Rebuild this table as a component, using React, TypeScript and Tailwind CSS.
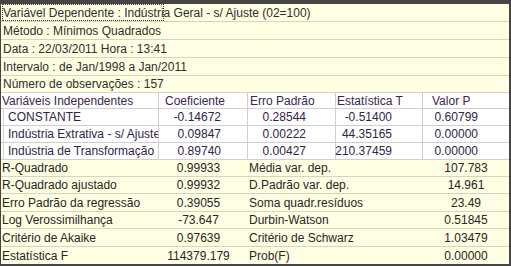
import React from 'react';

const info = [
  'Variável Dependente : Indústria Geral - s/ Ajuste (02=100)',
  'Método : Mínimos Quadrados',
  'Data : 22/03/2011  Hora : 13:41',
  'Intervalo : de Jan/1998 a Jan/2011',
  'Número de observações : 157',
];
const infoHeights = ['h-[18px]', 'h-[18px]', 'h-[18px]', 'h-[18px]', 'h-[17px]'];

const coefs = [
  ['CONSTANTE', '-0.14672', '0.28544', '-0.51400', '0.60799'],
  ['Indústria Extrativa - s/ Ajuste', '0.09847', '0.00222', '44.35165', '0.00000'],
  ['Indústria de Transformação', '0.89740', '0.00427', '210.37459', '0.00000'],
];

const stats = [
  ['R-Quadrado', '0.99933', 'Média var. dep.', '107.783', 'h-[17px]'],
  ['R-Quadrado ajustado', '0.99932', 'D.Padrão var. dep.', '14.961', 'h-[17px]'],
  ['Erro Padrão da regressão', '0.39055', 'Soma quadr.resíduos', '23.49', 'h-[18px]'],
  ['Log Verossimilhança', '-73.647', 'Durbin-Watson', '0.51845', 'h-[17px]'],
  ['Critério de Akaike', '0.97639', 'Critério de Schwarz', '1.03479', 'h-[18px]'],
  ['Estatística F', '114379.179', 'Prob(F)', '0.00000', 'h-[17px]'],
];

const cols = 'grid grid-cols-[158px_89px_88px_87px_1fr]';

export default function App() {
  return (
    <div className="w-[511px] h-[266px] bg-[#454545] pt-[4px] pl-[1px] pr-[2px] pb-[2px] font-['Liberation_Sans',Arial,sans-serif] text-[12px] leading-none">
      <div className="relative flex h-full flex-col bg-[#ffffe3] text-[#2e2e2e]">
        {/* focus rectangle on the first cell */}
        <div className="pointer-events-none absolute left-[1px] top-0 h-[17px] w-[162px] border border-dotted border-[#333]" />

        {info.map((t, i) => (
          <div key={i} className={`${infoHeights[i]} flex items-center whitespace-nowrap border-b border-[#d5d3c2] pl-[2px]`}>
            {t}
          </div>
        ))}

        <div className={`${cols} h-[16px] border-b border-[#cfcfcf] bg-white text-[#3a2550]`}>
          <div className="flex items-center border-r border-[#cfcfcf] pl-[1px] whitespace-nowrap">Variáveis Independentes</div>
          <div className="flex items-center border-r border-[#cfcfcf] pl-[6px]">Coeficiente</div>
          <div className="flex items-center border-r border-[#cfcfcf] pl-[2px]">Erro Padrão</div>
          <div className="flex items-center border-r border-[#cfcfcf] pl-[1px]">Estatística T</div>
          <div className="flex items-center pl-[9px]">Valor P</div>
        </div>

        {coefs.map((r, i) => (
          <div key={i} className={`${cols} h-[17px] border-b border-[#cfcfcf] bg-white text-[#2f2448]`}>
            <div className="ml-[2px] flex items-center overflow-hidden whitespace-nowrap border-x border-[#cfcfcf] pl-[4px]">{r[0]}</div>
            <div className="flex items-center justify-end border-r border-[#cfcfcf] pr-[26px]">{r[1]}</div>
            <div className="flex items-center justify-end border-r border-[#cfcfcf] pr-[29px]">{r[2]}</div>
            <div className="flex items-center justify-end border-r border-[#cfcfcf] pr-[30px]">{r[3]}</div>
            <div className="flex items-center justify-end pr-[31px]">{r[4]}</div>
          </div>
        ))}

        {stats.map((r, i) => (
          <div key={i} className={`${cols} ${r[4]} border-b border-[#d5d3c2] text-[#262626] last:border-b-0`}>
            <div className="flex items-center whitespace-nowrap pl-[1px]">{r[0]}</div>
            <div className="flex items-center justify-center pr-[10px]">{r[1]}</div>
            <div className="col-span-2 flex items-center pl-[1px] whitespace-nowrap">{r[2]}</div>
            <div className="flex items-center justify-center">{r[3]}</div>
          </div>
        ))}
      </div>
    </div>
  );
}
